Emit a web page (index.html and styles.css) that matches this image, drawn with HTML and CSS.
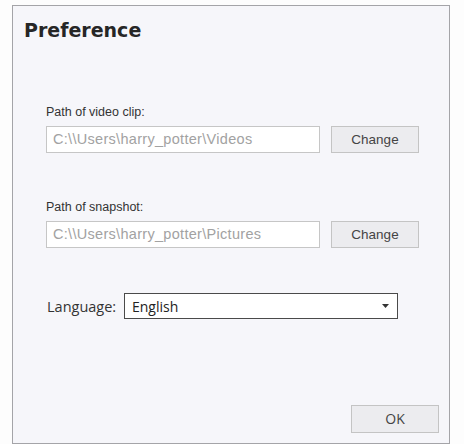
FILE: index.html
```html
<!DOCTYPE html>
<html>
<head>
<meta charset="utf-8">
<link rel="stylesheet" href="styles.css">
</head>
<body>
<div class="dialog">
  <div class="title">Preference</div>
  <div class="content">
    <div class="field first">
      <div class="label">Path of video clip:</div>
      <div class="row">
        <div class="path">C:\\Users\harry_potter\Videos</div>
        <div class="btn">Change</div>
      </div>
    </div>
    <div class="field second">
      <div class="label">Path of snapshot:</div>
      <div class="row">
        <div class="path">C:\\Users\harry_potter\Pictures</div>
        <div class="btn">Change</div>
      </div>
    </div>
    <div class="lang">
      <div class="lang-label">Language:</div>
      <div class="select">
        <span>English</span>
        <svg class="caret" width="7" height="4" viewBox="0 0 7 4"><path d="M0 0H7L3.5 4Z" fill="#333"/></svg>
      </div>
    </div>
  </div>
  <div class="footer">
    <div class="btn ok">OK</div>
  </div>
</div>
</body>
</html>
```
FILE: styles.css
```css
html, body {
  margin: 0;
  padding: 0;
  background: #fdfdfd;
}
body {
  padding: 5px 0 0 12px;
  font-family: "Liberation Sans", Arial, sans-serif;
}
.dialog {
  box-sizing: border-box;
  width: 438px;
  height: 439px;
  border: 1px solid #a4a4a8;
  background: #f6f6fa;
  display: flex;
  flex-direction: column;
}
.title {
  margin: 13px 0 0 11px;
  font-family: "DejaVu Sans", sans-serif;
  font-size: 19px;
  line-height: 22px;
  font-weight: bold;
  color: #262626;
}
.content {
  padding-left: 33px;
}
.field.first {
  margin-top: 63px;
}
.field.second {
  margin-top: 46px;
}
.label {
  font-size: 12.5px;
  line-height: 16px;
  color: #333;
  margin-bottom: 6px;
}
.row {
  display: flex;
  gap: 11px;
}
.path {
  box-sizing: border-box;
  width: 274px;
  height: 27px;
  border: 1px solid #c6c6c6;
  background: #fff;
  color: #a2a2a2;
  font-size: 14.5px;
  letter-spacing: 0.3px;
  line-height: 25px;
  padding-left: 6px;
  white-space: nowrap;
}
.btn {
  box-sizing: border-box;
  width: 88px;
  height: 27px;
  border: 1px solid #c4c4c4;
  background: #ececef;
  color: #444;
  font-size: 13.5px;
  line-height: 25px;
  text-align: center;
}
.lang {
  margin-top: 45px;
  display: flex;
  align-items: center;
}
.lang-label {
  width: 77px;
  margin-left: 1px;
  font-family: "Open Sans", sans-serif;
  font-size: 14.5px;
  color: #333;
}
.select {
  box-sizing: border-box;
  width: 274px;
  height: 26px;
  border: 1px solid #4a4a4a;
  background: #fff;
  display: flex;
  align-items: center;
  justify-content: space-between;
  padding: 0 8px 0 7px;
  font-family: "Open Sans", sans-serif;
  font-size: 14px;
  color: #222;
}
.caret {
  display: block;
}
.footer {
  margin-top: auto;
  display: flex;
  justify-content: flex-end;
  padding: 0 10px 10px 0;
}
.btn.ok {
  height: 28px;
  line-height: 26px;
  font-family: "Open Sans", sans-serif;
  font-size: 14px;
}
```
